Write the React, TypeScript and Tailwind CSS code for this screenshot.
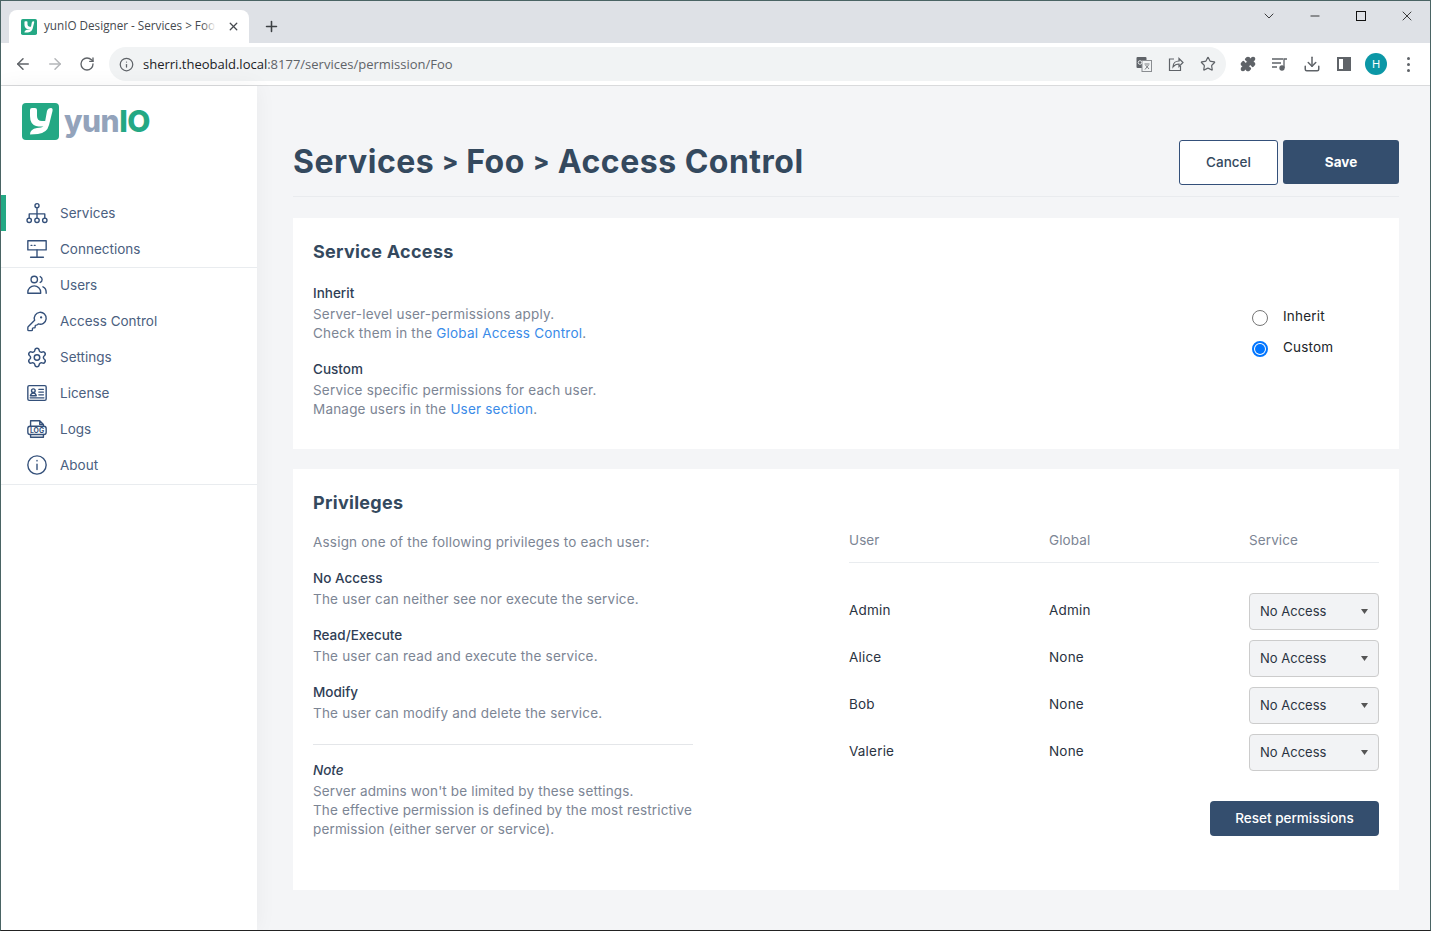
import { ChevronDown, Minus, X, Plus, ArrowLeft, ArrowRight, RotateCw, Info, Star, Puzzle, Download, Settings, KeyRound } from 'lucide-react';

const ink = 'text-[#34495e]';
const muted = 'text-[#7c8594]';

function LogoMark({ size }: { size: number }) {
  return (
    <svg width={size} height={size} viewBox="0 0 37 37">
      <rect width="37" height="37" rx="4" fill="#24a884" />
      <path fill="#fff" d="M8 7Q8 5 10 5h3Q15 5 15 7v6Q15 18 20 18L25 18 24 23Q19 24 14 23 8 21 8 13z" />
      <path fill="#fff" d="M29 5Q31 5 30.500 8L27 22Q25 30 16 31L8 31.500Q8 26 15 25L19 24.500Q22 24 23 19L25 8Q26 5 29 5z" />
    </svg>
  );
}

function Logo() {
  return (
    <div className="flex items-center gap-[5px]">
      <LogoMark size={37} />
      <span className="font-['Inter',sans-serif] font-extrabold text-[30px] leading-none tracking-[-0.5px] mt-[-2px]">
        <span className="text-[#93a3bb]">yun</span>
        <span className="text-[#24a884]">IO</span>
      </span>
    </div>
  );
}

const icon = { width: 22, height: 22, viewBox: '0 0 24 24', fill: 'none', stroke: '#34507a', strokeWidth: 1.5, strokeLinecap: 'round' as const, strokeLinejoin: 'round' as const };

const navIcons: Record<string, React.ReactNode> = {
  Services: (
    <svg {...icon}>
      <circle cx="12" cy="4" r="2.2" />
      <circle cx="3.500" cy="20" r="2.400" />
      <circle cx="12" cy="20" r="2.400" />
      <circle cx="20.500" cy="20" r="2.400" />
      <path d="M12 6.200v11.400M3.500 17.600V13h17v4.600" />
    </svg>
  ),
  Connections: (
    <svg {...icon}>
      <rect x="2" y="3" width="20" height="10" />
      <path d="M12 13v8M5 21h14M5.500 8h1M9 8h1" />
    </svg>
  ),
  Users: (
    <svg {...icon}>
      <circle cx="9" cy="6" r="3.500" />
      <path d="M2 21v-1a7 7 0 0 1 14 0v1z" />
      <path d="M15.500 2.800a3.500 3.500 0 0 1 0 6.400M18.500 14c2.200 1 3.500 3 3.500 6v1" />
    </svg>
  ),
  'Access Control': <KeyRound width={23} height={23} stroke="#34507a" strokeWidth={1.5} />,
  Settings: <Settings width={23} height={23} stroke="#34507a" strokeWidth={1.6} />,
  License: (
    <svg {...icon}>
      <rect x="2" y="4" width="20" height="16" rx="1.500" />
      <circle cx="8" cy="9.500" r="2" />
      <path d="M4.800 15c.5-2 1.600-2.800 3.200-2.800s2.700.8 3.200 2.800H4.800zM14 8h5M14 11h5M14 14h5M4.500 17.300h15" />
    </svg>
  ),
  Logs: (
    <svg {...icon}>
      <path d="M5 9V3h10l4 4v2M15 3v4h4M5 18v3h14v-3" />
      <rect x="2" y="9" width="20" height="9" rx="2.500" />
      <text x="12" y="16" textAnchor="middle" fontSize="7.500" fontWeight="700" fontFamily="Inter, sans-serif" fill="#34507a" stroke="none">LOG</text>
    </svg>
  ),
  About: (
    <svg {...icon}>
      <circle cx="12" cy="12" r="10" />
      <path d="M12 11v6M12 7v.5" />
    </svg>
  ),
};

function NavItem({ label, active }: { label: string; active?: boolean }) {
  return (
    <div className={active ? 'h-9 flex items-center border-l-[5px] border-[#24a884] pl-[20px]' : 'h-9 flex items-center pl-[25px]'}>
      <span className="w-[22px] h-6 flex items-center justify-center">{navIcons[label]}</span>
      <span className="ml-[12px] text-[13.5px] text-[#4b6080]">{label}</span>
    </div>
  );
}

function Perm({ user, global }: { user: string; global: string }) {
  return (
    <div className="flex items-center h-[37px] mb-[10px] text-[13.5px] tracking-[0.2px] text-[#2a3342]">
      <span className="w-[200px] mb-[2px]">{user}</span>
      <span className="w-[200px] mb-[2px]">{global}</span>
      <div className="w-[130px] h-[37px] rounded-[4px] border border-[#ccc] bg-[#f2f3f5] flex items-center justify-between px-[10px] text-[13px] tracking-normal">
        <span>No Access</span>
        <svg width="7" height="5" viewBox="0 0 7 5"><path d="M0 0h7L3.500 5z" fill="#555" /></svg>
      </div>
    </div>
  );
}

function Block({ title, lines }: { title: string; lines: React.ReactNode }) {
  return (
    <div>
      <div className="text-[13.5px] leading-[19px] font-medium text-[#2f3e55]">{title}</div>
      <div className={`text-[13.5px] leading-[19px] tracking-[0.2px] ${muted} mt-[2px]`}>{lines}</div>
    </div>
  );
}

export default function App() {
  return (
    <div className="w-[1431px] h-[931px] flex flex-col overflow-hidden border border-[#4a6464] border-b-[#222] font-['Inter',sans-serif]">
      {/* browser chrome */}
      <div className="h-[42px] shrink-0 bg-[#dee1e6] flex items-end pl-2 relative">
        <div className="relative w-[240px] h-[33px] bg-white rounded-t-[8px] flex items-center pl-[12px] pr-[10px] font-['Open_Sans',sans-serif] text-[11.7px] text-[#45494e]">
          <span className="shrink-0 flex"><LogoMark size={16} /></span>
          <span className="ml-[7px] mb-[2px] whitespace-nowrap">yunIO Designer - Services &gt; Foo</span>
          <span className="absolute left-[193px] top-0 w-[14px] h-full bg-gradient-to-r from-transparent to-white" />
          <X width={13} height={13} strokeWidth={2.4} className="absolute right-[9px] text-[#45494e]" />
        </div>
        <Plus width={17} height={17} strokeWidth={2.2} className="ml-[14px] mb-[8px] text-[#3c4043]" />
        <div className="absolute right-0 top-0 flex items-center text-[#111]">
          <span className="w-[46px] h-[29px] flex items-center justify-center"><ChevronDown width={16} height={16} strokeWidth={1.2} /></span>
          <span className="w-[46px] h-[29px] flex items-center justify-center"><Minus width={14} height={14} strokeWidth={1.4} /></span>
          <span className="w-[46px] h-[29px] flex items-center justify-center"><span className="w-[10px] h-[10px] border border-[#111]" /></span>
          <span className="w-[46px] h-[29px] flex items-center justify-center"><X width={16} height={16} strokeWidth={1.2} /></span>
        </div>
      </div>
      <div className="h-[43px] shrink-0 bg-white border-b border-[#d9dadc] flex items-center text-[#5f6368]">
        <ArrowLeft width={18} height={18} strokeWidth={2} className="ml-[13px]" />
        <ArrowRight width={18} height={18} strokeWidth={2} className="ml-[14px] text-[#b4b6b9]" />
        <RotateCw width={16} height={16} strokeWidth={2} className="ml-[15px]" />
        <div className="ml-[14px] w-[1117px] h-[34px] rounded-full bg-[#f1f3f4] flex items-center pl-[10px] pr-[10px]">
          <Info width={15} height={15} strokeWidth={2} />
          <span className="ml-[9px] mt-[2px] font-['Open_Sans',sans-serif] text-[13px]">
            <span className="text-[#202124]">sherri.theobald.local</span>
            <span className="text-[#5f6368]">:8177/services/permission/Foo</span>
          </span>
          <div className="ml-auto flex items-center gap-[16px]">
            <svg width="16" height="16" viewBox="0 0 16 16"><rect x="0.500" y="1" width="10" height="11" rx="1" fill="#5f6368" /><rect x="6" y="4.500" width="9.500" height="11" fill="#f1f3f4" stroke="#8a8d91" /><path d="M8.500 8h5M9 13.500l3.500-4.500M9.500 9l3.500 4" stroke="#5f6368" strokeWidth="0.800" fill="none" /><circle cx="4" cy="6.500" r="1.800" fill="none" stroke="#f1f3f4" strokeWidth="0.900" /></svg>
            <svg width="16" height="16" viewBox="0 0 16 16" fill="none" stroke="#5f6368" strokeWidth="1.200"><path d="M6 3H1.500v11.500h11V10" /><path d="M5 11c0-4 3-6 6-6V2.500l4 4-4 4V8c-2.500 0-4.500 1-6 3z" /></svg>
            <Star width={16} height={16} strokeWidth={1.8} />
          </div>
        </div>
        <Puzzle width={16} height={16} strokeWidth={2} fill="#5f6368" className="ml-[14px]" />
        <svg width="16" height="14" viewBox="0 0 16 14" fill="none" stroke="#5f6368" strokeWidth="1.300" className="ml-[16px]"><path d="M0 2h11M0 6h9M0 10h5" /><circle cx="10" cy="11" r="2" fill="#5f6368" /><path d="M12 11V2h3" /></svg>
        <Download width={18} height={18} strokeWidth={2} className="ml-[15px]" />
        <div className="ml-[16px] w-[14px] h-[14px] border-2 border-[#5f6368] flex justify-end"><div className="w-[6px] h-full bg-[#5f6368]" /></div>
        <div className="ml-[14px] w-[22px] h-[22px] rounded-full bg-[#0b97a6] text-white text-[11px] flex items-center justify-center">H</div>
        <div className="ml-[20px] flex flex-col gap-[3px]">
          <span className="w-[3px] h-[3px] rounded-full bg-[#5f6368]" />
          <span className="w-[3px] h-[3px] rounded-full bg-[#5f6368]" />
          <span className="w-[3px] h-[3px] rounded-full bg-[#5f6368]" />
        </div>
      </div>

      <div className="flex-1 flex min-h-0">
        {/* sidebar */}
        <aside className="relative z-10 w-[256px] shrink-0 bg-white shadow-[0_0_20px_rgba(0,0,0,0.05)] flex flex-col">
          <div className="h-[109px] pl-[21px] pt-[17px] shrink-0"><Logo /></div>
          <div className="border-b border-[#e9ecef]">
            <NavItem label="Services" active />
            <NavItem label="Connections" />
          </div>
          <div className="-mt-px pb-px border-b border-[#e9ecef]">
            <NavItem label="Users" />
            <NavItem label="Access Control" />
            <NavItem label="Settings" />
            <NavItem label="License" />
            <NavItem label="Logs" />
            <NavItem label="About" />
          </div>
        </aside>

        {/* main */}
        <main className="flex-1 bg-[#f4f5f7] pl-[36px] pr-[31px] pt-[54px]">
          <div className="flex items-start justify-between h-[57px] border-b border-[#e9ebee]">
            <h1 className={`text-[32px] leading-[44px] font-bold ${ink} tracking-[0.5px] flex items-center`}>
              Services
              <span className="w-[32px] text-center text-[24px] font-extrabold tracking-normal">&gt;</span>
              Foo
              <span className="w-[33px] text-center text-[24px] font-extrabold tracking-normal">&gt;</span>
              Access Control
            </h1>
            <div className="flex gap-[5px]">
              <button className={`w-[99px] h-[45px] bg-white border border-[#34507a] rounded-[3px] text-[13.5px] font-medium ${ink}`}>Cancel</button>
              <button className="w-[116px] h-[44px] bg-[#344e6e] rounded-[3px] text-[13.5px] font-bold text-white">Save</button>
            </div>
          </div>

          <section className="mt-[21px] h-[231px] bg-white p-5 flex justify-between">
            <div>
              <h2 className={`text-[18px] leading-[28px] font-bold tracking-[0.3px] ${ink}`}>Service Access</h2>
              <div className="mt-[18px] flex flex-col gap-[17px]">
                <Block title="Inherit" lines={<>Server-level user-permissions apply.<br />Check them in the <span className="text-[#3a8be8]">Global Access Control</span>.</>} />
                <Block title="Custom" lines={<>Service specific permissions for each user.<br />Manage users in the <span className="text-[#3a8be8]">User section</span>.</>} />
              </div>
            </div>
            <div className="w-[127px] pt-[64px] text-[13.5px] tracking-[0.2px] text-[#212529]">
              <div className="flex items-center h-[31px]">
                <span className="w-4 h-4 rounded-full border border-[#767676] bg-white shrink-0 mt-[1px]" />
                <span className="ml-[15px] mt-[-2px]">Inherit</span>
              </div>
              <div className="flex items-center h-[31px]">
                <span className="w-4 h-4 rounded-full border-2 border-[#0075ff] bg-white shrink-0 mt-[1px] flex items-center justify-center"><span className="w-[10px] h-[10px] rounded-full bg-[#0075ff]" /></span>
                <span className="ml-[15px] mt-[-2px]">Custom</span>
              </div>
            </div>
          </section>

          <section className="mt-5 h-[421px] bg-white p-5 flex justify-between">
            <div className="w-[380px]">
              <h2 className={`text-[18px] leading-[28px] font-bold tracking-[0.3px] ${ink}`}>Privileges</h2>
              <p className={`mt-[16px] text-[13.5px] leading-[19px] tracking-[0.2px] ${muted}`}>Assign one of the following privileges to each user:</p>
              <div className="mt-[17px] flex flex-col gap-[17px]">
                <Block title="No Access" lines="The user can neither see nor execute the service." />
                <Block title="Read/Execute" lines="The user can read and execute the service." />
                <Block title="Modify" lines="The user can modify and delete the service." />
              </div>
              <div className="mt-[21px] border-t border-[#e4e6e9] pt-[16px]">
                <div className="text-[13.5px] leading-[19px] font-medium italic text-[#2f3e55]">Note</div>
                <p className={`mt-[2px] text-[13.5px] leading-[19px] tracking-[0.15px] whitespace-nowrap ${muted}`}>
                  Server admins won't be limited by these settings.<br />
                  The effective permission is defined by the most restrictive<br />
                  permission (either server or service).
                </p>
              </div>
            </div>
            <div className="w-[530px] pt-[41px]">
              <div className={`flex h-[33px] border-b border-[#e9ecef] text-[13.5px] tracking-[0.1px] ${muted}`}>
                <span className="w-[200px]">User</span>
                <span className="w-[200px]">Global</span>
                <span>Service</span>
              </div>
              <div className="mt-[30px]">
                <Perm user="Admin" global="Admin" />
                <Perm user="Alice" global="None" />
                <Perm user="Bob" global="None" />
                <Perm user="Valerie" global="None" />
              </div>
              <div className="flex justify-end mt-[30px]">
                <button className="w-[169px] h-[35px] rounded-[4px] bg-[#344e6e] text-white text-[13.5px] font-medium">Reset permissions</button>
              </div>
            </div>
          </section>
        </main>
      </div>
    </div>
  );
}
